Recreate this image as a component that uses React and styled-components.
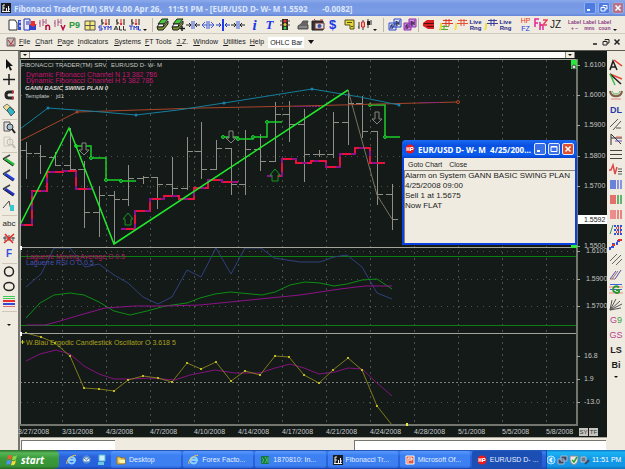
import React from "react";
import styled, { createGlobalStyle } from "styled-components";

const Global = createGlobalStyle`
  * { box-sizing: border-box; }
  html, body, #root { margin: 0; height: 100%; }
  body { font-family: "Liberation Sans", Arial, sans-serif; font-size: 7px; color: #222; overflow: hidden; }
  button, select, input { font: inherit; color: inherit; border: 0; padding: 0; margin: 0; background: none; }
`;

const cream = "#efebe0";
const dark = "#141a18";

const Window = styled.div`
  display: flex;
  flex-direction: column;
  height: 100%;
  background: ${cream};
`;

const TitleBar = styled.header`
  display: flex;
  align-items: center;
  gap: 3px;
  height: 16px;
  flex: none;
  padding: 0 1px;
  background: linear-gradient(#8ba9ea, #7698e3 25%, #7c9de6 80%, #6487d6);
`;

const Title = styled.h1`
  flex: 1;
  margin: 0;
  font: bold 8px "Noto Sans", sans-serif;
  white-space: pre;
  overflow: hidden;
  color: #dbe6fb;
`;

const WindowButtons = styled.div`
  display: flex;
  gap: ${(p) => p.$gap || 2}px;
`;

const WindowButton = styled.button`
  display: flex;
  align-items: center;
  justify-content: center;
  width: 12px;
  height: 12px;
  border: 1px solid ${(p) => (p.$bright ? "#e3ecff" : "#8eaef2")};
  border-radius: 2px;
  background: ${(p) => (p.$close ? (p.$bright ? "#dd5030" : "#b87486") : p.$bright ? "#3b6fe8" : "#4d7be0")};
`;

const Toolbar = styled.div`
  display: flex;
  align-items: center;
  height: 18px;
  flex: none;
  padding-left: 4px;
  border-bottom: 1px solid #cfcbbd;
`;

const ToolGroup = styled.div`
  display: flex;
  align-items: center;
  margin-left: ${(p) => p.$gap || 2}px;
`;

const Separator = styled.i`
  width: 1px;
  height: 14px;
  margin-left: ${(p) => p.$gap || 2}px;
  background: #bdb9aa;
`;

const Tool = styled.button`
  display: flex;
  align-items: center;
  justify-content: center;
  width: 15px;
  height: 15px;
  svg { display: block; }
`;

const Overflow = styled(Tool)`
  width: 5px;
  align-items: flex-end;
`;

const Glyph = styled.span`
  display: flex;
  flex-direction: column;
  align-items: center;
  font-family: ${(p) => p.$font || '"Liberation Sans"'}, sans-serif;
  font-size: ${(p) => p.$size || 9}px;
  line-height: ${(p) => p.$line || 10}px;
  font-weight: ${(p) => (p.$light ? 400 : 700)};
  font-style: ${(p) => (p.$italic ? "italic" : "normal")};
  color: ${(p) => p.$color || "#1d1d1d"};
`;

const Tint = styled.span`
  color: ${(p) => p.$color};
`;

const MenuBar = styled.nav`
  display: flex;
  align-items: center;
  height: 17px;
  flex: none;
  padding: 0 4px 0 6px;
  border-bottom: 1px solid #5c5a54;
`;

const MenuItem = styled.button`
  margin-left: ${(p) => p.$gap}px;
  white-space: nowrap;
  line-height: 10px;
  &:first-letter { text-decoration: underline; }
`;

const Picker = styled.label`
  display: flex;
  align-items: center;
  gap: 4px;
  margin-left: 4px;
`;

const Select = styled.select`
  appearance: none;
  width: 36px;
  height: 11px;
  padding-left: 2px;
  background: #fff;
`;

const Spacer = styled.div`
  flex: 1;
`;

const Main = styled.main`
  display: flex;
  flex: 1;
  min-height: 0;
`;

const SideBar = styled.aside`
  display: flex;
  flex-direction: column;
  align-items: center;
  flex: none;
  width: 18px;
  padding-top: 6px;
`;

const SideGroup = styled.div`
  padding-bottom: 2px;
  border-bottom: 1px solid #cfc8b9;
`;

const RightTools = styled.div`
  display: grid;
  grid-template-rows: repeat(21, 1fr);
  align-items: center;
  height: 78%;
`;

const Center = styled.section`
  position: relative;
  display: flex;
  flex-direction: column;
  flex: 1;
  min-width: 0;
  background: ${dark};
  border-left: 2px solid #77756f;
`;

const ScrollTrack = styled.div`
  display: flex;
  justify-content: space-between;
  height: 6px;
  flex: none;
  margin: 1px 32px 1px 0;
  background: #fdfdfb;
`;

const ScrollButton = styled.button`
  display: flex;
  align-items: center;
  justify-content: center;
  width: 10px;
  background: #f0ecdf;
  border: 1px solid #8a887f;
  border-width: 0 1px;
`;

const Chart = styled.svg`
  display: block;
  flex: 1;
  min-height: 0;
  width: 100%;
  font-family: "Liberation Sans", Arial, sans-serif;
`;

const DateAxis = styled.div`
  display: grid;
  grid-template-columns: repeat(12, 44fr) 33fr 28fr;
  align-items: center;
  height: 11px;
  flex: none;
  margin-left: -2px;
  color: #c9cbc8;
  white-space: nowrap;
`;

const AxisButtons = styled.div`
  display: flex;
  gap: 1px;
`;

const AxisButton = styled.button`
  width: 9px;
  height: 8px;
  font-size: 6px;
  line-height: 8px;
  background: #c6c5bf;
  color: #333;
`;

const StatusStrip = styled.div`
  display: flex;
  justify-content: space-between;
  height: 13px;
  flex: none;
  padding: 2px 1px 1px;
  background: ${cream};
  border-top: 1px solid #a9a698;
`;

const StatusField = styled.input`
  width: ${(p) => p.$width};
  height: 10px;
  background: #fff;
  border: 1px solid #77756f;
  border-width: 1px 0 0 1px;
`;

const Dialog = styled.div`
  position: absolute;
  top: 89px;
  right: 30px;
  display: flex;
  flex-direction: column;
  width: 175px;
  height: 105px;
  background: #0a3fe0;
  border-radius: 4px 4px 0 0;
  padding: 0 2px 2px;
`;

const DialogTitle = styled.div`
  display: flex;
  align-items: center;
  gap: 3px;
  height: 18px;
  flex: none;
  margin: 0 -2px;
  padding: 0 3px 0 3px;
  border-radius: 4px 4px 0 0;
  background: linear-gradient(#1a6bf4, #0a50e0 30%, #0a5cf0 80%, #0743cc);
  h2 {
    flex: 1;
    margin: 0;
    font: bold 8px "Noto Sans", sans-serif;
    color: #fff;
    white-space: pre;
  }
`;

const DialogMenu = styled.div`
  display: flex;
  align-items: center;
  gap: 7px;
  height: 12px;
  flex: none;
  padding-left: 4px;
  background: ${cream};
`;

const DialogBody = styled.div`
  flex: 1;
  background: ${cream};
  border: 1px solid #85837a;
  border-width: 1px 0 0 1px;
  font-size: 8px;
  line-height: 10px;
  p { margin: 0; white-space: nowrap; }
`;

const Taskbar = styled.footer`
  display: flex;
  align-items: stretch;
  height: 19px;
  flex: none;
  color: #fff;
  background: linear-gradient(#1c49a8, #3a80f3 10%, #2a62dc 35%, #2660dc 85%, #1a45a8);
`;

const Start = styled.button`
  display: flex;
  align-items: center;
  gap: 3px;
  width: 59px;
  padding-left: 6px;
  border-radius: 0 5px 5px 0;
  background: linear-gradient(#2a6a2a, #56b556 15%, #3a9a3a 45%, #379337 85%, #246a24);
  font: italic bold 10px "Open Sans", sans-serif;
`;

const QuickLaunch = styled.div`
  display: flex;
  align-items: center;
  width: 52px;
  padding-left: 5px;
`;

const Tasks = styled.div`
  display: flex;
  flex: 1;
  gap: 2px;
  padding: 1px 4px 1px 0;
`;

const Task = styled.button`
  display: flex;
  align-items: center;
  gap: 3px;
  flex: 1;
  min-width: 0;
  padding-left: 5px;
  border-radius: 2px;
  white-space: nowrap;
  color: #e4eeff;
  background: ${(p) => (p.$active ? "#1c4fb4" : "linear-gradient(#5a97fb, #3c81f3 25%, #3c7ff0 85%, #2c66d8)")};
`;

const Tray = styled.div`
  display: flex;
  align-items: center;
  width: 79px;
  border-left: 1px solid #0f4fa8;
  background: linear-gradient(#1273c4, #19b3f3 12%, #139be8 45%, #1295e6 85%, #0f6fb8);
`;

const Clock = styled.time`
  margin-left: 2px;
  white-space: nowrap;
`;

/* ---------- icons ---------- */

const Icon = ({ w = 14, h = 13, children }) => (
  <svg width={w} height={h} viewBox={`0 0 ${w} ${h}`} fill="none" aria-hidden="true">{children}</svg>
);

const P = ({ d, c = "#1d1d1d", w = 1, f = "none", dash }) => (
  <path d={d} stroke={c} strokeWidth={w} fill={f} strokeDasharray={dash} />
);

const Logo = ({ size = 10 }) => (
  <svg width={size} height={size} viewBox="0 0 10 10" aria-hidden="true">
    <rect width="10" height="10" fill="#1a1a1a" />
    <path d="M2 9V2H4M2 5H4M5.500 9V5M7.500 9V3M8 6H9M1 8.500H9" stroke="#f4f4f4" fill="none" />
  </svg>
);

const DownMark = () => <Icon w={4} h={4}><path d="M0 1H4L2 3Z" fill="#111" /></Icon>;
const BigDownMark = () => <Icon w={6} h={4}><path d="M0 0H6L3 4Z" fill="#111" /></Icon>;
const MinMark = () => <Icon w={8} h={8}><P d="M1 6H4" c="#fff" w={2} /></Icon>;
const MaxMark = () => <Icon w={8} h={8}><P d="M1 1.500H7V6.500H1ZM1 2H7" c="#fff" /></Icon>;
const RestoreMark = ({ c = "#fff" }) => <Icon w={8} h={8}><P d="M3 2.500V1.500H7V5H5M1 3.500H5V7H1Z" c={c} /></Icon>;
const CloseMark = ({ c = "#fff" }) => <Icon w={8} h={8}><P d="M1.500 1.500L6.500 6.500M6.500 1.500L1.500 6.500" c={c} w={1.5} /></Icon>;
const AlarmDot = () => (
  <Icon w={10} h={10}>
    <circle cx="5" cy="5" r="4.500" fill="#f01818" />
    <P d="M2 3V7M2 5H4M4 3V7M5.500 7V3.500H8V5.500H6" c="#fff" />
  </Icon>
);

const Bars = ({ letter }) => (
  <Icon>
    <P d="M2 2V9M1 5H2M5 1V8M5 4H7M8 1V6" c="#a05080" />
    <P d={letter === "n" ? "M8 12V7M8 8.500C9 6.500 11.500 7 11.500 9V12" : "M8 7L10 11.500L12 7"} c="#b01040" w={1.5} />
  </Icon>
);
const Pair = ({ text, color }) => (
  <Icon>
    <P d="M4 7V1M3 3H4M4 5H6M11 7V1" />
    <P d="M8 1V7M7 5L8 7L9 5" c="#e82020" />
    {text === "SYM" && <P d="M4 8H1V10H4V12H1M5.500 8L7 10L8.500 8M7 10V12M10 12V8L11.500 10L13 8V12" c={color} />}
    {text === "ALL" && <P d="M1 12L3 8L5 12M2 11H4M6.500 8V12H9M10.500 8V12H13" c={color} />}
    {text === "TML" && <P d="M1 8H5M3 8V12M6 12V8L7.500 10L9 8V12M10.500 8V12H13" c={color} />}
  </Icon>
);
const Eraser = ({ plus }) => (
  <Icon>
    <path d="M2 6L6 1H12L8 6Z" fill="#48c838" stroke="#222" />
    <path d="M1 9L3 6H8L7 9Z" fill="#fff" stroke="#222" />
    <path d="M2 12L1 9H7L12 3V6L7 12Z" fill="#7e9a30" stroke="#222" />
    {plus && <P d="M11 8V13M8.500 10.500H14" w={1.5} />}
  </Icon>
);
const Squeeze = ({ c = "#222", out, tall }) => (
  <Icon>
    <P d={out ? "M1 7H6M8 7H13M4 4L1 7L4 10M10 4L13 7L10 10" : "M0 7H5M14 7H9M3 5L5 7L3 9M11 5L9 7L11 9"} c={c} />
    <P d={tall ? "M7 1V13" : "M6 3V11M8 3V11"} c={tall ? "#2038e8" : "#3858d8"} w={tall ? 2 : 1} />
  </Icon>
);
const Multi = ({ c }) => (
  <Icon>
    <path d="M1 5H8V12H1ZM6 1H13V9H6Z" fill={c === "#9030b0" ? "#c890d8" : "#dce4f6"} stroke={c} />
    <P d="M2 11L3 7L5 10L7 5M8 7V3L10 6L12 2" c={c} />
    <P d="M4 6V11M9 3V8M11 4V7" />
  </Icon>
);
const Flag = ({ a, b, pole }) => (
  <Icon>
    <P d="M4 2.500H13M3 5.500H14" c={a} />
    <P d="M7 1V8M10 1V8" c={a} />
    {b && <P d="M1 8.500H10M0 11.500H9M5 7V12" c={b} />}
    {pole && <P d="M2 5V9L1 12" c={pole} w={2} />}
  </Icon>
);
const LiveRng = () => <Glyph $size={6} $line={6} $color="#28288a">Live<span>Rng</span></Glyph>;
const LabelIcon = ({ t }) => <Glyph $size={5} $line={6} $color="#8c3c84">Label<span>{t}</span></Glyph>;

const topTools = [
  { gap: 3, items: [
    ["New page", <Icon><path d="M1 2H7L9 5V12H1Z" fill="#fff" stroke="#333" /><path d="M10 2H13V12H10Z" fill="#3450d8" /><P d="M11 4H13M11 8H13" c="#fff" /></Icon>],
    ["Open chart", <Icon><path d="M1 1H7V12H1Z" fill="#e8e8ff" stroke="#2838b8" /><P d="M3 4H6M3 6H6" c="#2030a0" /><path d="M6 7H13V12H6Z" fill="#3044d0" /><path d="M8 3H12V6H14L10 9L6 6H8Z" fill="#e83030" /></Icon>],
    ["Bars N", <Bars letter="n" />],
    ["Bars V", <Bars letter="v" />],
    ["Page", <Glyph $color="#28983c" $size={9}>P9</Glyph>],
    ["Grid", <Icon><path d="M2 3H12V12H2Z" fill="#f6e97a" stroke="#555" /><P d="M7 3V12M2 7.500H12" c="#555" /></Icon>],
    ["Symbol", <Pair text="SYM" color="#2838d0" />],
    ["All", <Pair text="ALL" color="#333" />],
    ["Time", <Pair text="TML" color="#2838d0" />],
  ], more: true, sep: 5 },
  { gap: 2, items: [
    ["Erase", <Eraser />], ["Erase and add", <Eraser plus />],
    ["Compress", <Squeeze />], ["Expand", <Squeeze out c="#3858d8" />],
    ["Widen bars", <Squeeze tall c="#2038c8" />], ["Narrow bars", <Squeeze />],
  ] },
  { gap: 2, items: [
    ["Info", <Glyph $font='"Liberation Serif"' $italic $size={15} $color="#1a38e8">i</Glyph>],
    ["Text", <Glyph $font='"Liberation Serif"' $italic $size={13} $color="#1a38e8">T</Glyph>],
    ["Signal", <Icon><path d="M4 1H10V12H4Z" fill="#282828" /><P d="M2 3H12M2 7H12" c="#444" /><circle cx="7" cy="3" r="1.500" fill="#f03030" /><circle cx="7" cy="6.500" r="1.500" fill="#e8c030" /><circle cx="7" cy="10" r="1.500" fill="#38d048" /></Icon>],
  ] },
  { gap: 3, items: [
    ["Print", <Icon><path d="M2 8L5 6L7 3H12L11 6L12 7V11H2Z" fill="#666" stroke="#555" /><P d="M3 9H11" c="#aaa" /></Icon>],
    ["Camera", <Icon><path d="M1 3H12V12H1Z" fill="#333" stroke="#222" /><path d="M4 5H13V11H4Z" fill="#ddd" stroke="#703030" /><circle cx="8.500" cy="8" r="2" fill="#4450a0" /><P d="M3 1L5 3M9 2H12" c="#c03030" /></Icon>],
    ["Account", <Glyph $size={13} $color="#1a38e8">$</Glyph>],
  ] },
  { gap: 2, items: [
    ["Note", <Icon><path d="M2 2H11V11H7V7H2Z" fill="#e8d838" stroke="#55501c" /><P d="M4 4.500H9M8 8.500H10" c="#55501c" /></Icon>],
    ["Candles", <Icon><P d="M1 11V4M0 9H1M5 2V12M10 1V10M13 2V7" c="#333" /><path d="M3.500 4H6.500V9H3.500Z" fill="#f8b0a8" stroke="#e02828" /><path d="M9 3H12V7H9Z" fill="#222" /></Icon>],
  ], more: true, sep: 6 },
  { gap: 3, items: [["Tile charts", <Multi c="#3048c8" />], ["Overlay charts", <Multi c="#9030b0" />]], sep: 1 },
  { gap: 2, items: [
    ["Stop", <Icon><path d="M1 5L5 2H12V11H6L1 8Z" fill="#d82020" /><P d="M2 5.500H12M5 8.500H12" c="#501010" /></Icon>],
  ] },
  { gap: 2, items: [
    ["Levels", <Flag a="#e03828" b="#50a830" pole="#e8d838" />],
    ["Red range", <Flag a="#e85038" pole="#f0e050" />],
    ["Live range", <LiveRng />],
    ["Blue range", <Flag a="#3c3c9a" pole="#f0e050" />],
    ["Live range 2", <LiveRng />],
  ] },
  { gap: 5, items: [
    ["HP FZ", <Glyph $size={7} $line={8} $light $color="#f03020">HP<Tint $color="#1838e0">FZ</Tint></Glyph>],
    ["Fh Z", <Icon><P d="M1 9V1H5M1 5H4M6 12V4M6 8C7 6 9 7 9 9V12" c="#e02898" w={1.5} /><P d="M9 2H13L9 7H13" c="#e84060" w={1.5} /></Icon>],
    ["JZ", <Glyph $size={10} $light>JZ</Glyph>],
  ] },
  { gap: 4, items: [["Label plus", <LabelIcon t="+ −" />], ["Label moves", <LabelIcon t="mns" />], ["Label count", <LabelIcon t="coun" />]], more: true },
];

const Pen = ({ c, tip }) => (
  <Icon>
    {!tip && <P d="M1 5L8 1" c="#444" w={1.5} />}
    <P d={tip ? "M1 9L7 2L9 11" : "M3 5L12 11"} c={tip ? "#444" : c} w={tip ? 1 : 3} />
    {tip ? <path d="M8 6H12V12H8Z" fill="#35c8d0" /> : <P d="M1 5L11 12" c="#222" />}
  </Icon>
);
const Lens = ({ faded }) => (
  <Icon>
    <P d="M2 1H8V10H2Z" c={faded ? "#ccc8bc" : "#555"} f={faded ? "none" : "#dcdcdc"} />
    <circle cx="8" cy="6" r="3" stroke={faded ? "#bfbbb0" : "#333"} fill={faded ? "none" : "#a8c4d0"} />
    <P d="M10 8L13 12" c={faded ? "#bfbbb0" : "#222"} w={2} />
  </Icon>
);

const leftTools = [
  [
    ["Pointer", <Icon><path d="M4 1V11L6.500 8.500L8 12.500L10 12L8 8H11Z" fill="#111" /></Icon>],
    ["Crosshair", <Icon><P d="M7 1V12M1 6.500H13" w={1.5} /></Icon>],
    ["Magnet", <Icon><P d="M11 4H7C3 4 3 10 7 10H11" w={3} c="#252525" /><P d="M10 4H12M10 10H12" c="#b04040" w={3} /></Icon>],
    ["Rubber", <Icon><path d="M1 4L5 1L12 7L8 11Z" fill="#e8dc90" stroke="#777" /><path d="M5 7L8 4L13 9L9 13Z" fill="#28b8c8" stroke="#555" /></Icon>],
  ],
  [["Zoom in", <Lens />], ["Zoom out", <Lens faded />]],
  [["Green line", <Pen c="#28b838" />], ["Blue line", <Pen c="#2040e0" />], ["Blue ray", <Pen c="#2030c0" />], ["Fill", <Pen tip />]],
  [
    ["Add text", <Glyph $size={8} $light>abc</Glyph>],
    ["Remove text", <Icon><P d="M1 6H13M3 4V9M7 3V9M11 5V9" c="#444" /><P d="M3 2L11 11M12 2L2 11" c="#e82828" w={1.5} /></Icon>],
    ["Font", <Glyph $size={10} $color="#3450e0">F</Glyph>],
  ],
  [
    ["Circle", <Icon><circle cx="7" cy="6.500" r="4.500" stroke="#222" strokeWidth="1.500" /></Icon>],
    ["Ellipse", <Icon><ellipse cx="7" cy="6.500" rx="5" ry="4" stroke="#222" strokeWidth="1.500" /></Icon>],
    ["Colour bands", <Icon><P d="M1 1.500H13M1 3.500H13" c="#40c858" /><P d="M1 6H13" c="#e83030" w={2} /><P d="M1 9H13" c="#3848d8" w={2} /><P d="M1 11.500H13" c="#e07070" /></Icon>],
  ],
];

const Columns = ({ a, b }) => <Icon><P d="M2 2V11M4 2V11M6 2V11" c={a} w={1.5} /><P d="M9 2V11M12 2V11" c={b} w={1.5} /></Icon>;
const rightTools = [
  ["Angle text", <Icon><P d="M1 12L4 3L8 12M2 9H7" w={1.5} /><P d="M5 2L13 8" c="#e83828" w={1.5} /></Icon>],
  ["Fan", <Icon><P d="M1 1L13 6" c="#e84838" w={1.5} /><P d="M1 1L12 11" w={1.5} /><P d="M1 1L6 12" c="#38c048" w={1.5} /></Icon>],
  ["Arc", <Icon><P d="M1 3C2 10 12 10 13 3" c="#806048" w={2} /><P d="M3 3C4 7 10 7 11 3" c="#50b060" /><P d="M2 11H12" c="#e08080" /></Icon>],
  ["DL", <Glyph $size={9} $color="#2838a8">DL</Glyph>],
  ["Channel", <Icon><P d="M1 9L9 1M4 12L12 3" c="#555" /><P d="M7 10H12" c="#555" /></Icon>],
  ["Retrace", <Icon><P d="M2 1V12M2 5H13M2 1L12 11" c="#333" /><P d="M6 8H13" c="#7050c0" /><P d="M7 4H13" c="#e06060" /></Icon>],
  ["Levels", <Icon><P d="M1 2.500H13M1 6.500H13M1 10.500H13" c="#444" /></Icon>],
  ["Wave", <Icon><P d="M0 7H2L4 2L6 11L8 4" c="#e04848" w={1.5} /><P d="M9 6H13M9 8.500H13M9 11H13" c="#555" /></Icon>],
  ["Blue cycles", <Columns a="#4060d8" b="#6878e0" />],
  ["Mixed cycles", <Columns a="#e04848" b="#38a048" />],
  ["Red cycles", <Columns a="#e87070" b="#e86060" />],
  ["Dots", <Icon><P d="M1 11L4 2" c="#389048" /><P d="M5 3H13M5 7H13M5 11H13" c="#3850d8" w={2} dash="2 1" /><P d="M7 5H12M7 9H12" c="#e03838" w={2} dash="1 1" /></Icon>],
  ["Steps", <Icon><P d="M1 12V9H4V6H8V3H12" c="#3850d8" w={2} dash="3 1" /><P d="M9 2H13M3 7H6" c="#e03030" w={2} /></Icon>],
  ["Parallel", <Icon><P d="M1 8L8 1M3 11L12 2M7 12L13 6" c="#666" /></Icon>],
  ["Fork", <Icon><P d="M1 11L7 3M6 11L12 2" c="#5050b0" /><P d="M3 11L9 3M1 11H6" c="#a07070" /></Icon>],
  ["G lines", <Icon><P d="M1 1.500H13M1 6.500H13" c="#4060e0" /><P d="M0 4H14M0 10H14" c="#f4b8b0" w={2} /><P d="M10 4.500C7 2 4 4 4 6.500S8 11 10 9V7H7" c="#289838" w={2} /></Icon>],
  ["Rays", <Icon><P d="M1 12L3 2M1 12L7 1M1 12L11 3M1 12L13 6M1 12L12 10" c="#555" /></Icon>],
  ["G9", <Glyph $size={9} $light $color="#b83c90"><span>G<Tint $color="#38a048">9</Tint></span></Glyph>],
  ["GS", <Glyph $size={9} $light $color="#b83c90">GS</Glyph>],
  ["LS", <Glyph $size={9}>LS</Glyph>],
  ["Bi", <Glyph $size={9}>Bi</Glyph>],
];

/* ---------- chart data: x, high, low, open, close ---------- */

const bars = [
  [26, 142, 179, 150, 153], [40, 145, 174, 153, 156], [55, 152, 165, 157, 165], [70, 128, 171, 165, 169],
  [84, 161, 228, 169, 212], [99, 186, 237, 212, 195], [114, 191, 244, 195, 199], [128, 165, 206, 199, 178],
  [143, 176, 184, 178, 177], [157, 177, 209, 177, 184], [172, 157, 195, 184, 188], [187, 137, 190, 188, 151],
  [201, 122, 179, 151, 169], [216, 140, 170, 169, 148], [231, 148, 195, 148, 184], [245, 130, 195, 184, 149],
  [260, 134, 171, 149, 161], [275, 102, 162, 161, 114], [289, 101, 142, 114, 124], [304, 109, 182, 124, 154],
  [319, 150, 157, 154, 154], [333, 112, 158, 154, 122], [348, 90, 145, 122, 103], [362, 96, 138, 103, 131],
  [377, 131, 205, 131, 194], [392, 184, 230, 194, 219],
];

const lowSteps = [
  "M19 225H32V191H47V172H63V171H76V189H92",
  "M121 229H135V211H150V199H164V196H179V199H194V188H208V180H222V182H238",
  "M267 176H282V159H296V163H311V161H326V167H340V154H355V148H370V163H385",
];
const highSteps = ["M76 146H91V158H106V180H121V181H136", "M223 137H238V139H253V137H267V122H282", "M370 105H385V137H400"];
const highDots = [[76, 146], [91, 158], [106, 180], [121, 181], [223, 137], [238, 139], [253, 137], [267, 122], [370, 105], [385, 137]];

const trend = [[48, 108], [136, 115], [224, 103], [312, 89], [399, 105]];
const rsi = "26,287 41,274 54,248 70,248 85,267 99,264 114,275 128,283 143,297 158,304 172,297 187,270 201,277 216,248 231,274 245,248 261,248 274,258 300,262 320,262 334,257 347,255 362,267 377,293 392,299";
const laguerre = "26,318 40,303 54,295 70,293 84,295 99,302 114,311 130,315 147,311 165,306 187,303 200,298 215,294 230,292 262,295 275,292 290,285 305,282 320,283 334,286 347,284 362,280 377,279 392,289";
const laguerreAvg = "26,325 45,325 60,321 80,315 105,308 135,306 165,306 200,305 230,302 260,299 300,295 340,289 365,286 392,286";
const blau = [[26, 333], [41, 337], [55, 343], [70, 356], [84, 388], [99, 389], [114, 391], [128, 380], [143, 376], [158, 378], [172, 382], [187, 363], [201, 369], [216, 362], [231, 381], [245, 371], [260, 375], [275, 356], [289, 357], [304, 375], [319, 383], [333, 370], [348, 358], [362, 370], [377, 406], [392, 425]];
const blauAvg = "26,361 40,354 56,350 70,354 84,366 99,374 114,379 130,379 150,378 175,380 190,375 215,370 235,373 260,373 275,368 290,364 304,368 319,374 335,372 348,368 362,369 377,383 392,396";

const axis = [
  [584, 65, "1.6100"], [584, 95, "1.6000"], [584, 125, "1.5900"], [584, 156, "1.5800"], [584, 186, "1.5700"],
  [584, 246, "1.5500"], [586, 251, "1.6100"], [586, 279, "1.5900"], [586, 306, "1.5700"],
  [584, 356, "16.8"], [584, 379, "1.9"], [584, 402, "-13.0"],
];
const gridX = Array.from({ length: 12 }, (_, i) => 62 + 44 * i);
const gridY = [95, 156, 186, 251, 279, 306, 402];

const dates = ["3/27/2008", "3/31/2008", "4/3/2008", "4/7/2008", "4/10/2008", "4/14/2008", "4/17/2008", "4/21/2008", "4/24/2008", "4/28/2008", "5/1/2008", "5/5/2008", "5/8/2008"];

const down = "M-2 -6H2V1H5L0 6L-5 1H-2Z";
const up = "M-3 6H3V0H5L0 -6L-5 0H-3Z";

function PriceChart() {
  return (
    <Chart viewBox="20 59 587 367" preserveAspectRatio="xMinYMin meet" role="img" aria-label="EUR/USD price chart">
      <g stroke="#4d524b" strokeDasharray="1 5" shapeRendering="crispEdges">
        {gridY.map((y) => <path key={y} d={`M21 ${y + 0.5}H577`} />)}
      </g>
      <g stroke="#4b514c" strokeDasharray="2 4" shapeRendering="crispEdges">
        {gridX.map((x) => <path key={x} d={`M${x + 0.5} 60V425`} />)}
      </g>

      <g fill="none" shapeRendering="crispEdges">
        {bars.map(([x, top, bottom, open, close]) => (
          <path key={x} stroke="#8f8f88" d={`M${x + 0.5} ${top}V${bottom}M${x - 6} ${open + 0.5}H${x}M${x} ${close + 0.5}H${x + 6}`} />
        ))}
        {lowSteps.map((d) => <path key={d} d={d} stroke="#e8103c" strokeWidth="2" />)}
        {lowSteps.map((d) => <path key={d} d={d} stroke="#8a1290" strokeDasharray="5 9" strokeWidth="2" />)}
      </g>
      <g fill="none">
        {highSteps.map((d) => <path key={d} d={d} stroke="#18d028" strokeWidth="1.500" />)}
      </g>
      {highDots.map(([x, y]) => <circle key={`${x}-${y}`} cx={x} cy={y} r="1.500" fill="#0c7a20" stroke="#20d030" />)}

      <polyline points="20,141 77,112 200,108 300,106 458,102" fill="none" stroke="#a8452c" />
      <path d="M294 106.500H320M420 102.500H440" stroke="#86208a" strokeDasharray="2 1" />
      <polyline points="20,129 48,108 90,111 136,115 178,110 224,103 312,89 360,97 399,105" fill="none" stroke="#147e9c" />
      {trend.map(([x, y]) => <circle key={x} cx={x} cy={y} r="1.500" fill="#1682b0" />)}
      <circle cx="77" cy="112" r="1.500" fill="#a8452c" />
      <circle cx="458" cy="102" r="1.500" fill={dark} stroke="#b84a20" />

      <polyline points="348,90 377,195 392,219" fill="none" stroke="#77745f" />
      <polyline points="20,225 69,128 114,244 348,90" fill="none" stroke="#22e82c" strokeWidth="1.500" />
      {[[84, 149], [231, 137], [377, 118]].map(([x, y]) => <path key={x} d={down} transform={`translate(${x} ${y})`} fill={dark} stroke="#85857e" />)}
      {[[128, 219], [275, 175]].map(([x, y]) => <path key={x} d={up} transform={`translate(${x} ${y})`} fill={dark} stroke="#129a20" />)}

      <path d="M20 256.500H577M20 325.500H577" stroke="#0b7f12" />
      <polyline points={rsi} fill="none" stroke="#30407c" />
      <polyline points={laguerre} fill="none" stroke="#0e8c14" />
      <polyline points={laguerreAvg} fill="none" stroke="#8c1288" />
      <path d="M20 382.500H577" stroke="#7c7f78" strokeDasharray="2 2" />
      <polyline points={blauAvg} fill="none" stroke="#84127e" />
      <polyline points={blau.map((p) => p.join()).join(" ")} fill="none" stroke="#807a1c" />
      {blau.map(([x, y]) => <rect key={x} x={x - 1} y={y - 1} width="2" height="2" fill="#c4b820" />)}

      <g stroke="#a3a59c" fill="none" shapeRendering="crispEdges">
        <path d="M20 247.500H577M20 333.500H577" />
        <path d="M20.500 426V59.500H577" />
        <path d="M20 425H578M577 59V426" stroke="#73756f" strokeWidth="2" />
      </g>
      <path d={axis.map(([, y]) => `M577 ${y}.5H580`).join("")} stroke="#a3a59c" />
      <path d="M20 246H22V250H20ZM20 332H22V336H20Z" fill="#fff" />
      <path d="M571 60H577V69H571ZM571 245H577V248H571Z" fill="#28e838" />
      <circle cx="574" cy="67" r="2" fill="#ddd" stroke="#444" />
      <path d="M406 423H408V426H406Z" fill="#f0ec40" />

      <g fontSize="7" fill="#c3c5c1">
        {axis.map(([x, y, t]) => <text key={y} x={x} y={y + 2}>{t}</text>)}
      </g>
      <rect x="578" y="215" width="29" height="9" fill="#fff" />
      <text x="584" y="222" fontSize="7" fill="#222">1.5592</text>

      <g fontSize="6" fill="#c6c8c4">
        <text x="21" y="67">FIBONACCI TRADER(TM) SRV</text>
        <text x="111" y="67">EUR/USD D- W- M</text>
        <text x="25" y="90" fontWeight="bold" fontStyle="italic" fill="#dcdcd8">GANN BASIC SWING PLAN 0</text>
        <text x="25" y="98">Template</text>
        <text x="56" y="98">jd1</text>
      </g>
      <g fontSize="7">
        <text x="26" y="77" fill="#c01470">Dynamic Fibonacci Channel N 13 382 786</text>
        <text x="26" y="83" fill="#c01470">Dynamic Fibonacci Channel H 5 382 786</text>
        <text x="26" y="259" fill="#b81868">Laguerre Moving Average O 0.5</text>
        <text x="26" y="265" fill="#4850b4">Laguerre RSI O C 0.5</text>
        <text x="26" y="345" fill="#a8a01c">W.Blau Ergodic Candlestick Oscillator O 3.618 5</text>
      </g>
      <path d="M22.500 340V344M20.500 342H24.500" stroke="#d0c828" />
    </Chart>
  );
}

/* ---------- task bar icons ---------- */

const IeIcon = () => (
  <Icon w={11} h={11}>
    <P d="M9 7C7 11 2 9.500 2.500 6S8.500 2 9 6H3" c="#8cd0ff" w={2} />
    <P d="M1 10C-1 7 7 0 10 1.500" c="#f0c850" />
  </Icon>
);
const WinFlag = () => (
  <Icon w={12} h={12}>
    <path d="M2 2Q4 0 6 2L5 6Q3 4 1 6Z" fill="#f05a30" />
    <path d="M7 2Q9 3 11 1L10 5Q8 7 6 6Z" fill="#8ad848" />
    <path d="M1 7Q3 5 5 7L4 11Q2 9 0 11Z" fill="#5090f8" />
    <path d="M6 7Q8 8 10 6L9 10Q7 12 5 11Z" fill="#f8d838" />
  </Icon>
);
const quick = [
  ["Internet Explorer", <IeIcon />],
  ["Outlook", <Icon w={11} h={11}><circle cx="5.500" cy="5.500" r="4" fill="#68a8e8" /><path d="M2 3H9V8H2Z" fill="#e8f0f8" stroke="#3870b8" /><P d="M2 3L5.500 6L9 3" c="#3870b8" /></Icon>],
  ["Show desktop", <Icon w={11} h={11}><path d="M3 1H9V7H3Z" fill="#c8f0f8" stroke="#58b8d0" /><path d="M2 8H8V11H2Z" fill="#68c8e0" /></Icon>],
];
const tasks = [
  ["Desktop", <Icon w={10} h={10}><path d="M1 2H4L5 3H9V9H1Z" fill="#f0d060" stroke="#a07820" /><path d="M3 5H9V8H4Z" fill="#fff4b0" /></Icon>],
  ["Forex Facto...", <IeIcon />],
  ["1870810: In...", <Icon w={10} h={10}><path d="M1 1H9V9H1Z" fill="#187840" /><P d="M2 3L4 5L2 8M5 2L7 5L5 8M8 2V8" c="#48c070" /></Icon>],
  ["Fibonacci Tr...", <Logo />],
  ["Microsoft Of...", <Icon w={10} h={10}><path d="M1 1H9V9H1Z" fill="#e05838" stroke="#fff" /><P d="M3 8V3H7V5H4" c="#fff" /></Icon>],
  ["EUR/USD D- ...", <AlarmDot />],
];

const menus = [["File", 3], ["Chart", 5], ["Page", 5], ["Indicators", 4], ["Systems", 6], ["FT Tools", 4], ["J.Z.", 5], ["Window", 5], ["Utilities", 5], ["Help", 4]];

export default function App() {
  return (
    <Window>
      <Global />
      <TitleBar>
        <Logo />
        <Title>{"Fibonacci Trader(TM) SRV 4.00 Apr 26,   11:51 PM - [EUR/USD D- W- M 1.5592       -0.0082]"}</Title>
        <WindowButtons>
          <WindowButton aria-label="Minimize"><MinMark /></WindowButton>
          <WindowButton aria-label="Restore"><RestoreMark /></WindowButton>
          <WindowButton aria-label="Close" $close><CloseMark /></WindowButton>
        </WindowButtons>
      </TitleBar>

      <Toolbar role="toolbar">
        {topTools.map((g, i) => (
          <React.Fragment key={i}>
            <ToolGroup $gap={g.gap}>
              {g.items.map(([name, icon]) => <Tool key={name} aria-label={name} title={name}>{icon}</Tool>)}
              {g.more && <Overflow aria-label="More tools"><DownMark /></Overflow>}
            </ToolGroup>
            {g.sep && <Separator $gap={g.sep} />}
          </React.Fragment>
        ))}
      </Toolbar>

      <MenuBar>
        <Icon w={10} h={10}><path d="M1 1H9V9H1Z" fill="#c8b8b8" stroke="#666" /><P d="M2 3L5 7L8 2M3 8H8" c="#a03838" /></Icon>
        {menus.map(([m, gap]) => <MenuItem key={m} $gap={gap}>{m}</MenuItem>)}
        <Picker>
          <Select aria-label="Bar style" defaultValue="OHLC Bar"><option>OHLC Bar</option></Select>
          <BigDownMark />
        </Picker>
        <Spacer />
        <WindowButtons $gap={3}>
          <button aria-label="Minimize chart"><Icon w={8} h={8}><P d="M2 6H6" w={1.5} /></Icon></button>
          <button aria-label="Restore chart"><RestoreMark c="#222" /></button>
          <button aria-label="Close chart"><CloseMark c="#222" /></button>
        </WindowButtons>
      </MenuBar>

      <Main>
        <SideBar>
          {leftTools.map((g, i) => (
            <SideGroup key={i}>
              {g.map(([name, icon]) => <Tool key={name} aria-label={name} title={name}>{icon}</Tool>)}
            </SideGroup>
          ))}
          <Overflow aria-label="More drawing tools"><DownMark /></Overflow>
        </SideBar>

        <Center>
          <ScrollTrack>
            <ScrollButton aria-label="Scroll left"><DownMark /></ScrollButton>
            <ScrollButton aria-label="Scroll right"><DownMark /></ScrollButton>
          </ScrollTrack>
          <PriceChart />
          <DateAxis>
            {dates.map((d) => <span key={d}>{d}</span>)}
            <AxisButtons><AxisButton>SY</AxisButton><AxisButton>TF</AxisButton></AxisButtons>
          </DateAxis>
          <StatusStrip>
            <StatusField $width="16%" aria-label="Status" readOnly />
            <StatusField $width="43%" aria-label="Message" readOnly />
          </StatusStrip>

          <Dialog role="dialog" aria-label="Alarm">
            <DialogTitle>
              <AlarmDot />
              <h2>{"EUR/USD D- W- M  4/25/200..."}</h2>
              <WindowButtons $gap={2}>
                <WindowButton $bright aria-label="Minimize alarm"><MinMark /></WindowButton>
                <WindowButton $bright aria-label="Maximize alarm"><MaxMark /></WindowButton>
                <WindowButton $bright $close aria-label="Close alarm"><CloseMark /></WindowButton>
              </WindowButtons>
            </DialogTitle>
            <DialogMenu><button>Goto Chart</button><button>Close</button></DialogMenu>
            <DialogBody>
              <p>Alarm on System GANN BASIC SWING PLAN</p>
              <p>4/25/2008 09:00</p>
              <p>Sell 1 at 1.5675</p>
              <p>Now FLAT</p>
            </DialogBody>
          </Dialog>
        </Center>

        <SideBar>
          <RightTools>
            {rightTools.map(([name, icon]) => <Tool key={name} aria-label={name} title={name}>{icon}</Tool>)}
          </RightTools>
          <Overflow aria-label="More line tools"><DownMark /></Overflow>
        </SideBar>
      </Main>

      <Taskbar>
        <Start><WinFlag />start</Start>
        <QuickLaunch>
          {quick.map(([name, icon]) => <Tool key={name} aria-label={name}>{icon}</Tool>)}
        </QuickLaunch>
        <Tasks>
          {tasks.map(([name, icon], i) => <Task key={name} $active={i === 5}>{icon}{name}</Task>)}
        </Tasks>
        <Tray>
          <Icon w={10} h={12}><circle cx="4" cy="6" r="4" fill="#38b0f8" stroke="#b8e0ff" /><P d="M5 4L3 6L5 8" c="#fff" w={1.5} /></Icon>
          <Icon w={12} h={12}><path d="M4 2H10V7H4ZM1 5H7V10H1Z" fill="#3c4a68" stroke="#a8b8d0" /></Icon>
          <Icon w={11} h={12}><path d="M1 2H9V6Q9 9 5 11Q1 9 1 6Z" fill="#e8e8e0" stroke="#889" /><P d="M3 6L5 8L8 3" c="#28a038" w={1.5} /></Icon>
          <Icon w={10} h={12}><path d="M1 3H6V8H1Z" fill="#707888" stroke="#b8c0c8" /><P d="M5 10L9 6" c="#384868" w={2} /></Icon>
          <Clock>11:51 PM</Clock>
        </Tray>
      </Taskbar>
    </Window>
  );
}
